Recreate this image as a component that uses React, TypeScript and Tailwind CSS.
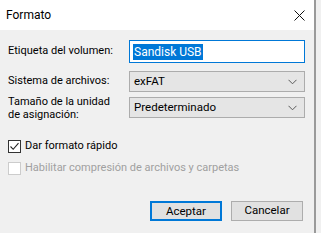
import React from 'react';

const font = { fontFamily: 'Roboto, "Liberation Sans", Arial, sans-serif' };

const Chevron: React.FC = () => (
  <svg width="9" height="6" viewBox="0 0 9 6" className="absolute right-[7px] top-1/2 -translate-y-1/2">
    <path d="M0.5 0.8 L4.5 4.8 L8.5 0.8" fill="none" stroke="#5a5a5a" strokeWidth="1" />
  </svg>
);

const Select: React.FC<{ value: string }> = ({ value }) => (
  <div className="relative flex h-[21px] w-[176px] items-center border border-[#acacac] bg-[#e5e5e5] pl-[4px] text-[11.5px] text-black">
    {value}
    <Chevron />
  </div>
);

const Check: React.FC<{ checked?: boolean; disabled?: boolean; label: string }> = ({ checked, disabled, label }) => (
  <div className="flex h-[13px] items-center gap-[4px]">
    <div
      className={`flex h-[13px] w-[13px] shrink-0 items-center justify-center border bg-white ${
        disabled ? 'border-[#cccccc]' : 'border-[#333333]'
      }`}
    >
      {checked && (
        <svg width="11" height="11" viewBox="0 0 11 11">
          <path d="M1.5 5.5 L4.2 8.3 L9.5 2.2" fill="none" stroke="#222" strokeWidth="1.1" />
        </svg>
      )}
    </div>
    <span className={`whitespace-nowrap text-[11px] ${disabled ? 'text-[#a0a0a0]' : 'text-black'}`}>{label}</span>
  </div>
);

export default function App() {
  return (
    <div className="flex h-[233px] w-[321px] bg-[#f0f0f0]" style={font}>
      <div className="flex w-[316px] flex-col border-r-2 border-[#9a9a9a]">
        {/* Title bar */}
        <div className="flex h-[30px] items-center justify-between bg-white pl-[6px] pr-[9px]">
          <span className="text-[12px] text-black">Formato</span>
          <svg width="11" height="11" viewBox="0 0 11 11">
            <path d="M0.5 0.5 L10.5 10.5 M10.5 0.5 L0.5 10.5" stroke="#111" strokeWidth="1" />
          </svg>
        </div>

        {/* Body */}
        <div className="flex flex-1 flex-col pl-[8px] pr-[9px] pt-[10px] text-[11px]">
          <div className="flex h-[23px] items-center justify-between">
            <span className="whitespace-nowrap">Etiqueta del volumen:</span>
            <div className="flex h-[23px] w-[176px] items-center border border-[#0078d7] bg-white pl-[3px]">
              <span className="bg-[#0078d7] px-[1px] text-[12px] leading-[16px] text-white">Sandisk USB</span>
            </div>
          </div>

          <div className="mt-[8px] flex h-[21px] items-center justify-between">
            <span className="whitespace-nowrap">Sistema de archivos:</span>
            <Select value="exFAT" />
          </div>

          <div className="mt-[5px] flex h-[21px] items-center justify-between">
            <span className="whitespace-nowrap leading-[13px]">
              Tamaño de la unidad
              <br />
              de asignación:
            </span>
            <Select value="Predeterminado" />
          </div>

          <div className="mt-[22px] flex flex-col gap-[9px]">
            <Check checked label="Dar formato rápido" />
            <Check disabled label="Habilitar compresión de archivos y carpetas" />
          </div>

          <div className="mt-[26px] flex justify-end gap-[9px] pr-[2px]">
            <button className="h-[20px] w-[72px] border-2 border-[#0078d7] bg-[#e1e1e1] text-[11.5px] text-black">
              Aceptar
            </button>
            <button className="h-[20px] w-[72px] border border-[#adadad] bg-[#e1e1e1] text-[11.5px] text-black">
              Cancelar
            </button>
          </div>
        </div>
      </div>
    </div>
  );
}
